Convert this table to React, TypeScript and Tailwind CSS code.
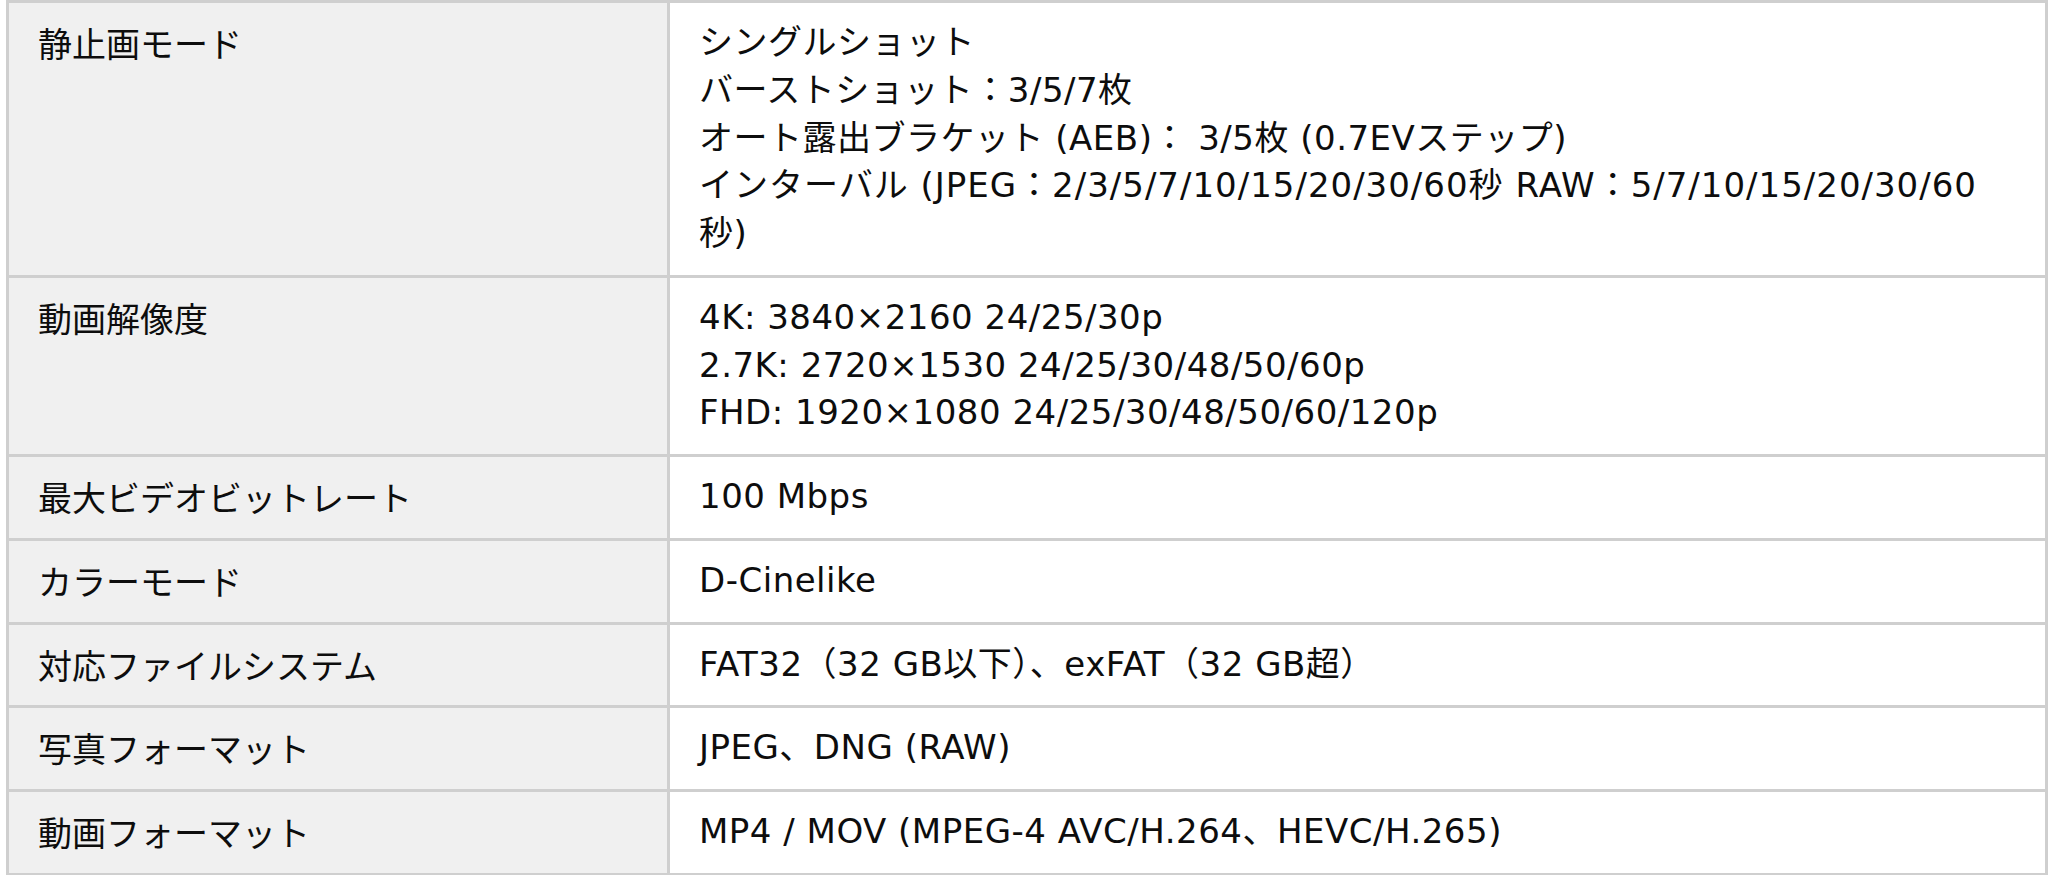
import React from "react";

type Line = { t: string; wide?: boolean };
type Row = { label: string; lines: Line[] };

const rows: Row[] = [
  {
    label: "静止画モード",
    lines: [
      { t: "シングルショット" },
      { t: "バーストショット：3/5/7枚" },
      { t: "オート露出ブラケット (AEB)： 3/5枚 (0.7EVステップ)" },
      { t: "インターバル (JPEG：2/3/5/7/10/15/20/30/60秒 RAW：5/7/10/15/20/30/60", wide: true },
      { t: "秒)" },
    ],
  },
  {
    label: "動画解像度",
    lines: [
      { t: "4K: 3840×2160 24/25/30p" },
      { t: "2.7K: 2720×1530 24/25/30/48/50/60p" },
      { t: "FHD: 1920×1080 24/25/30/48/50/60/120p" },
    ],
  },
  { label: "最大ビデオビットレート", lines: [{ t: "100 Mbps" }] },
  { label: "カラーモード", lines: [{ t: "D-Cinelike" }] },
  { label: "対応ファイルシステム", lines: [{ t: "FAT32（32 GB以下）、exFAT（32 GB超）" }] },
  { label: "写真フォーマット", lines: [{ t: "JPEG、DNG (RAW)" }] },
  { label: "動画フォーマット", lines: [{ t: "MP4 / MOV (MPEG-4 AVC/H.264、HEVC/H.265)" }] },
];

export default function App() {
  return (
    <div className="w-[2048px] h-[875px] bg-white overflow-hidden">
      <div
        className="ml-[6px] w-[2042px] grid grid-cols-[661px_1fr] border-t-[3px] border-l-[3px] border-[#cfcfcf] text-[34px] leading-[47.75px] text-[#0d0d0d]"
        style={{ fontFamily: '"DejaVu Sans", "Noto Sans CJK JP", sans-serif' }}
      >
        {rows.map((r, i) => (
          <React.Fragment key={i}>
            <div
              className="bg-[#f0f0f0] border-r-[3px] border-b-[3px] border-[#cfcfcf] pl-[29px] pr-4 pt-[16px] pb-[17px]"
              style={{ fontFamily: '"Noto Sans CJK JP", sans-serif' }}
            >
              {r.label}
            </div>
            <div className="bg-white border-r-[3px] border-b-[3px] border-[#cfcfcf] pl-[29px] pr-4 pt-[16px] pb-[17px]">
              {r.lines.map((l, j) => (
                <div
                  key={j}
                  className={l.wide ? "whitespace-pre tracking-[1px]" : "whitespace-pre tracking-[0.5px]"}
                >
                  {l.t}
                </div>
              ))}
            </div>
          </React.Fragment>
        ))}
      </div>
    </div>
  );
}
